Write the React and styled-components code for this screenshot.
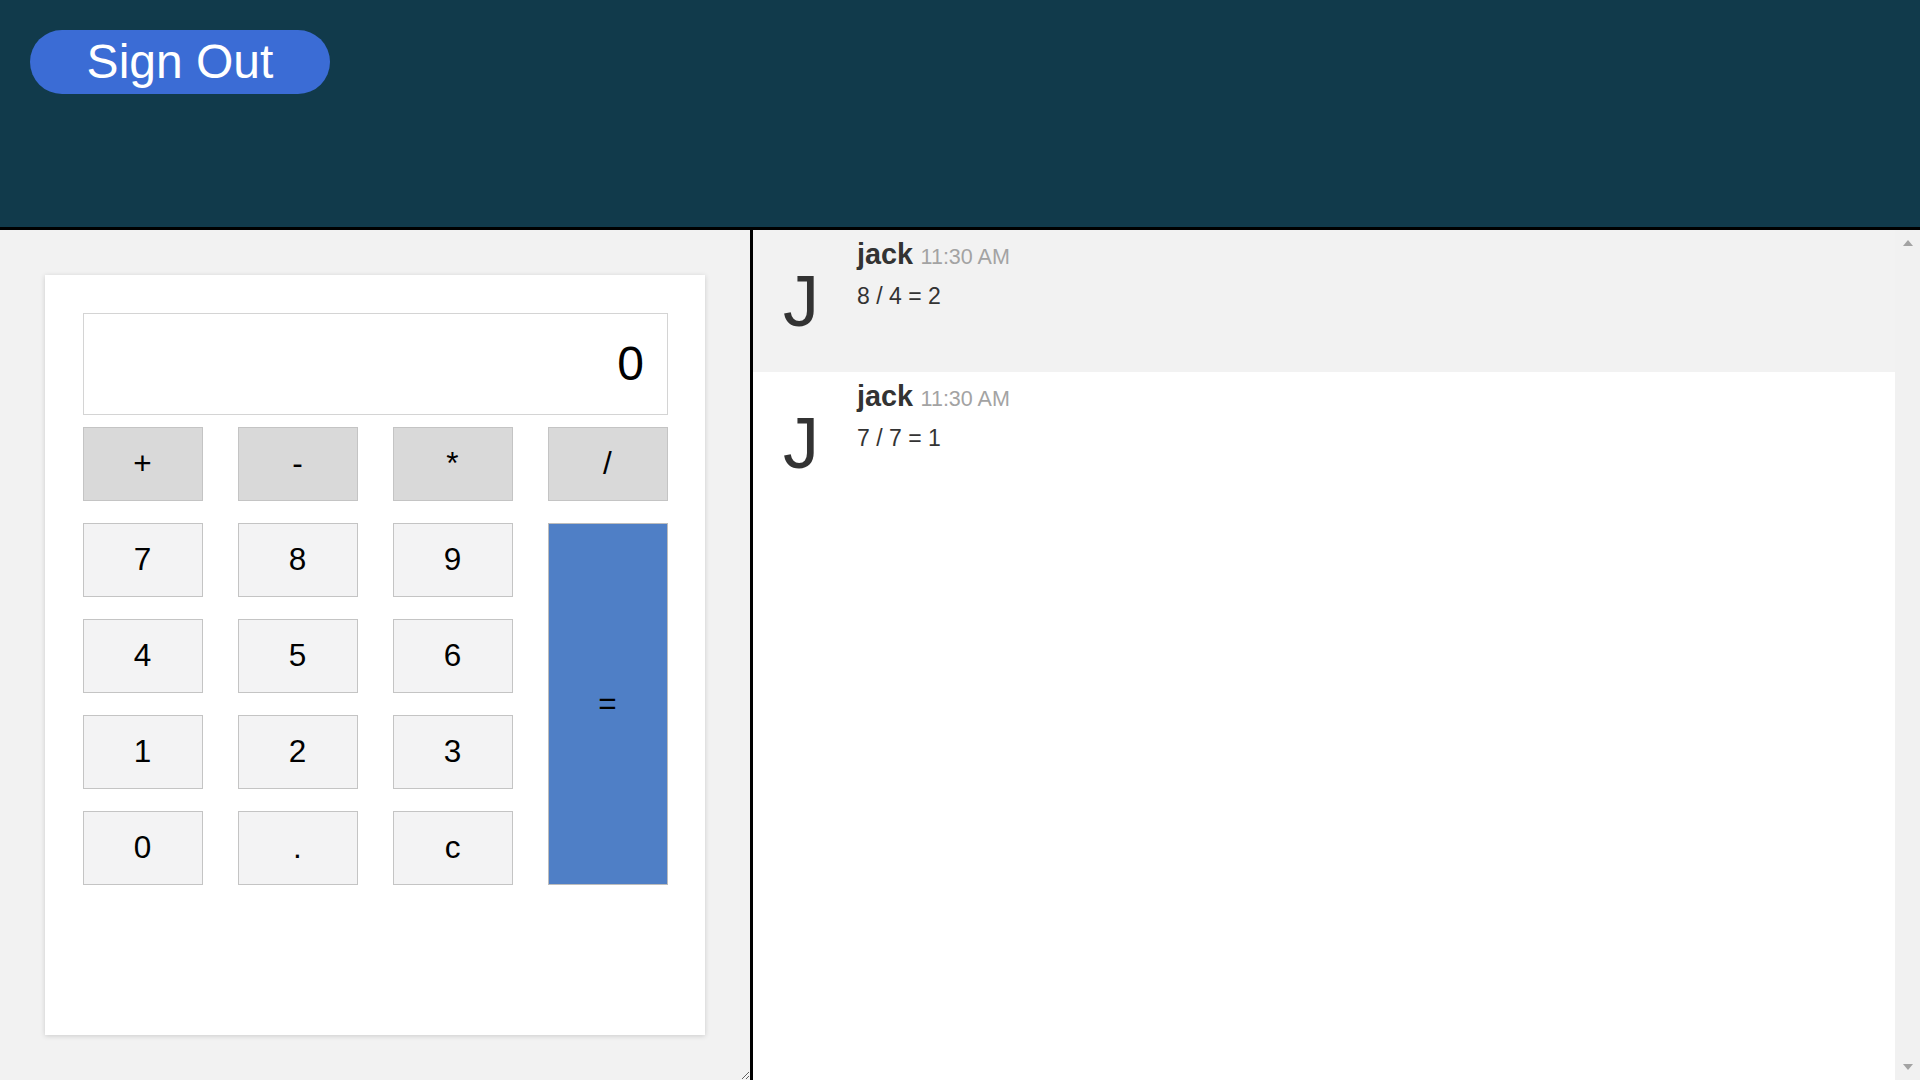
import React from 'react'
import styled, { createGlobalStyle } from 'styled-components'

const GlobalStyle = createGlobalStyle`
  html, body {
    margin: 0;
    padding: 0;
  }
  body {
    font-family: "Liberation Sans", Arial, sans-serif;
    color: #333;
  }
  * { box-sizing: border-box; }
`

const Page = styled.div`
  width: 100vw;
  height: 100vh;
  display: flex;
  flex-direction: column;
  overflow: hidden;
`

const Header = styled.header`
  height: 230px;
  flex: none;
  background: #113a4b;
  border-bottom: 3px solid #000;
  padding: 30px;
`

const SignOutBtn = styled.button`
  width: 300px;
  height: 64px;
  border: none;
  border-radius: 32px;
  background: #3b6cd5;
  color: #fff;
  font-family: "Liberation Sans", Arial, sans-serif;
  font-size: 48px;
  line-height: 1;
  padding: 0;
  cursor: pointer;
`

const Main = styled.div`
  flex: 1;
  display: flex;
  min-height: 0;
`

const CalcPane = styled.section`
  width: 753px;
  flex: none;
  background: #f2f2f2;
  border-right: 3px solid #000;
  resize: horizontal;
  overflow: hidden;
`

const Calculator = styled.div`
  margin: 45px;
  height: 760px;
  background: #fff;
  padding: 37.5px;
  box-shadow: 0 1px 5px rgba(0, 0, 0, 0.16);
`

const Display = styled.div`
  height: 102px;
  border: 1px solid #d4d4d4;
  display: flex;
  align-items: center;
  justify-content: flex-end;
  padding-right: 22.5px;
  font-size: 48px;
  color: #000;
  margin-bottom: 12px;
`

const Keys = styled.div`
  display: grid;
  grid-template-columns: repeat(4, 1fr);
  grid-template-rows: repeat(5, 74px);
  column-gap: 35px;
  row-gap: 22px;
`

const Key = styled.button`
  border: 1.5px solid #c4c4c4;
  background: ${p => (p.$op ? '#d9d9d9' : '#f3f3f4')};
  font-family: "Liberation Sans", Arial, sans-serif;
  font-size: 31.5px;
  color: #000;
  padding: 0;
  display: flex;
  align-items: center;
  justify-content: center;
  cursor: pointer;
`

const EqualKey = styled(Key)`
  grid-column: 4;
  grid-row: 2 / span 4;
  background: #4f7fc6;
  border-color: #bcbcbc;
`

const ChatPane = styled.section`
  flex: 1;
  display: flex;
  min-width: 0;
  background: #fff;
`

const MessageList = styled.div`
  flex: 1;
  overflow-y: auto;
`

const ScrollTrack = styled.div`
  width: 25px;
  flex: none;
  background: #f1f1f1;
  display: flex;
  flex-direction: column;
  justify-content: space-between;
  align-items: center;
  padding: 10px 0;
`

const Arrow = styled.span`
  width: 0;
  height: 0;
  border-left: 5.5px solid transparent;
  border-right: 5.5px solid transparent;
  ${p => (p.$down ? 'border-top' : 'border-bottom')}: 6px solid #a3a3a3;
`

const Message = styled.div`
  display: flex;
  align-items: flex-start;
  padding: 7.5px 30px 30px;
  background: ${p => (p.$shaded ? '#f2f2f2' : '#fff')};
`

const Avatar = styled.div`
  width: 74px;
  flex: none;
  margin-top: 22.5px;
  font-size: 72px;
  color: #333;
`

const Body = styled.div`
  display: flex;
  flex-direction: column;
`

const NameLine = styled.div`
  display: flex;
  align-items: baseline;
`

const Name = styled.span`
  font-size: 28.8px;
  font-weight: bold;
  color: #333;
`

const Time = styled.span`
  font-size: 21.5px;
  color: #a3a3a3;
  margin-left: 7.5px;
`

const Text = styled.div`
  font-size: 23px;
  color: #333;
  margin-top: 12px;
`

const ops = ['+', '-', '*', '/']
const digits = ['7', '8', '9', '4', '5', '6', '1', '2', '3', '0', '.', 'c']

const messages = [
  { user: 'jack', time: '11:30 AM', text: '8 / 4 = 2' },
  { user: 'jack', time: '11:30 AM', text: '7 / 7 = 1' },
]

export default function App() {
  return (
    <Page>
      <GlobalStyle />
      <Header>
        <SignOutBtn>Sign Out</SignOutBtn>
      </Header>
      <Main>
        <CalcPane>
          <Calculator>
            <Display>0</Display>
            <Keys>
              {ops.map(o => (
                <Key key={o} $op>{o}</Key>
              ))}
              {digits.map(d => (
                <Key key={d}>{d}</Key>
              ))}
              <EqualKey>=</EqualKey>
            </Keys>
          </Calculator>
        </CalcPane>
        <ChatPane>
          <MessageList>
            {messages.map((m, i) => (
              <Message key={i} $shaded={i === 0}>
                <Avatar>{m.user[0].toUpperCase()}</Avatar>
                <Body>
                  <NameLine>
                    <Name>{m.user}</Name>
                    <Time>{m.time}</Time>
                  </NameLine>
                  <Text>{m.text}</Text>
                </Body>
              </Message>
            ))}
          </MessageList>
          <ScrollTrack>
            <Arrow />
            <Arrow $down />
          </ScrollTrack>
        </ChatPane>
      </Main>
    </Page>
  )
}
